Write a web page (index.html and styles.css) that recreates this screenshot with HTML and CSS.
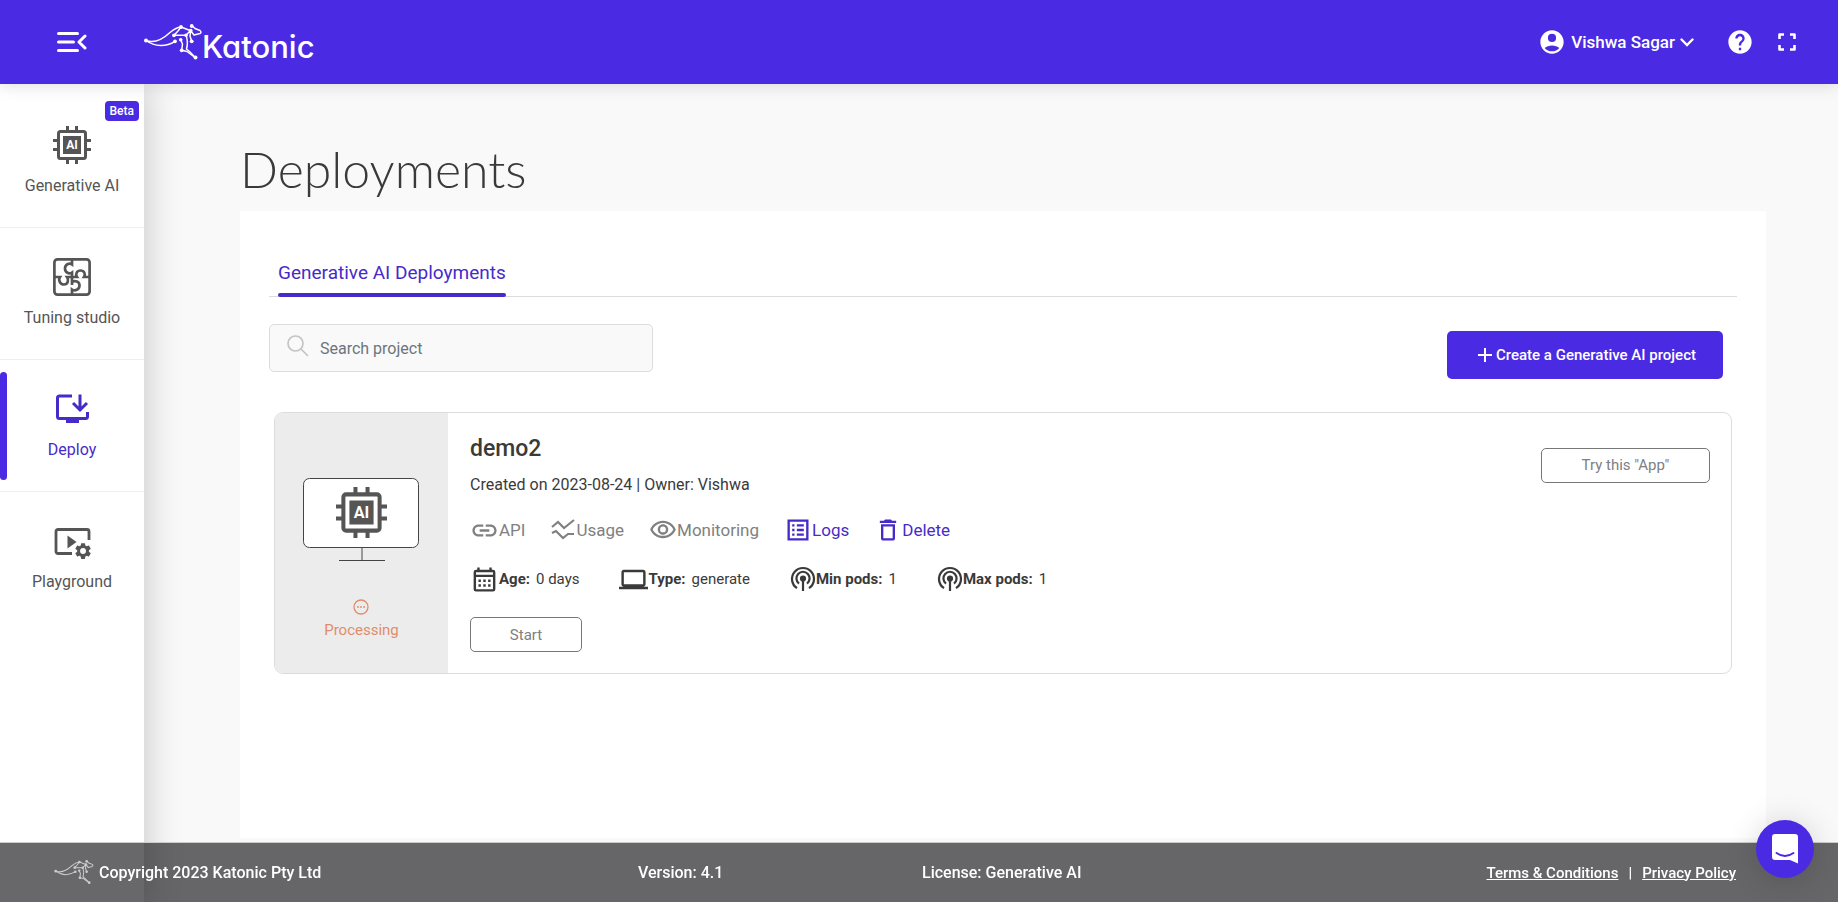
FILE: index.html
```html
<!DOCTYPE html>
<html lang="en">
<head>
<meta charset="utf-8">
<title>Katonic – Deployments</title>
<link rel="stylesheet" href="styles.css">
</head>
<body>
<svg class="defs" aria-hidden="true">
  <symbol id="roo" viewBox="0 0 58 37">
    <g fill="none" stroke="currentColor" stroke-width="1.500" stroke-linejoin="round" stroke-linecap="round">
      <path d="M2 16.500C11 20 19 15 26 8.500C30 5 33 3.500 37 3L46.700 6.700"/>
      <path d="M2 16.500C11 23 22 23 31 17.300"/>
      <path d="M47.700 1.300L51 4.500L56 6.500Q58 8.500 56 9.500L50 11L46.700 6.700"/>
      <path d="M46.700 6.700L46 12L47.700 17.300M37 3L34 7L30 11.300L42 11.300L46 7"/>
      <path d="M36.700 15.700L38.500 20L37.700 26.300L43 27.500L51 33.300"/>
      <path d="M42 11.300Q44.500 18 42.500 25L46 28L51 33.300"/>
    </g>
    <g fill="currentColor">
      <circle cx="2" cy="16.500" r="2"/><circle cx="37" cy="3" r="1.900"/><circle cx="46.700" cy="6.700" r="1.900"/><circle cx="47.700" cy="2" r="1.900"/><circle cx="30" cy="11.300" r="1.900"/><circle cx="42" cy="11.300" r="1.800"/><circle cx="31" cy="17.300" r="1.900"/><circle cx="36.700" cy="15.700" r="1.800"/><circle cx="37.700" cy="26.300" r="1.900"/><circle cx="47.700" cy="17.300" r="1.900"/><circle cx="51.500" cy="33.500" r="2"/>
    </g>
  </symbol>
  <symbol id="chip" viewBox="0 0 38 38">
    <path fill="currentColor" d="M13 0h3v5h-3zM22 0h3v5h-3zM13 33h3v5h-3zM22 33h3v5h-3zM0 13h5v3H0zM0 22h5v3H0zM33 13h5v3h-5zM33 22h5v3h-5zM10 10h18v18H10z"/>
    <rect x="5.500" y="5.500" width="27" height="27" rx="2" fill="none" stroke="currentColor" stroke-width="3"/>
    <text x="19" y="23" text-anchor="middle" class="chip-text">AI</text>
  </symbol>
  <symbol id="pods" viewBox="0 0 26 26">
    <g fill="none" stroke="currentColor" stroke-width="2.200"><path d="M7 22.200A11 11 0 1 1 19 22.200M9 17.600A6.600 6.600 0 1 1 17 17.600M13 13v12"/><circle cx="13" cy="12.500" r="2" fill="currentColor"/></g>
  </symbol>
</svg>

<header class="topbar">
  <button class="icon-btn menu-btn" aria-label="Collapse menu">
    <svg width="30" height="20" viewBox="0 0 30 20" fill="none" stroke="currentColor" stroke-width="3" stroke-linecap="round" stroke-linejoin="round"><path d="M1.500 1.500h19M1.500 10h15M1.500 18.500h19M28 4L22 10L28 16"/></svg>
  </button>
  <a class="brand" href="#"><svg class="brand-roo" width="58" height="37"><use href="#roo"/></svg><span>Katonic</span></a>
  <button class="user">
    <svg width="28" height="28" viewBox="0 0 24 24" fill="currentColor"><path d="M12 2C6.480 2 2 6.480 2 12s4.480 10 10 10 10-4.480 10-10S17.520 2 12 2zm0 3a3.500 3.500 0 1 1 0 7 3.500 3.500 0 0 1 0-7zm0 15c-2.500 0-4.800-1.100-6.300-2.900C7.200 15.800 9.600 15 12 15s4.800.8 6.300 2.100A8.200 8.200 0 0 1 12 20z"/></svg>
    <span>Vishwa Sagar</span>
    <svg width="14" height="9" viewBox="0 0 14 9" fill="none" stroke="currentColor" stroke-width="2.400" stroke-linecap="round"><path d="M1.500 1.500L7 7L12.500 1.500"/></svg>
  </button>
  <button class="icon-btn" aria-label="Help"><svg width="28" height="28" viewBox="0 0 24 24" fill="currentColor"><path d="M12 2C6.480 2 2 6.480 2 12s4.480 10 10 10 10-4.480 10-10S17.520 2 12 2zm1 17h-2v-2h2v2zm2.070-7.750l-.9.920C13.450 12.900 13 13.500 13 15h-2v-.5c0-1.100.450-2.100 1.170-2.830l1.240-1.260c.370-.360.590-.860.590-1.410 0-1.100-.9-2-2-2s-2 .9-2 2H8c0-2.210 1.790-4 4-4s4 1.790 4 4c0 .880-.360 1.680-.930 2.250z"/></svg></button>
  <button class="icon-btn" aria-label="Full screen"><svg width="18" height="18" viewBox="0 0 18 18" fill="none" stroke="currentColor" stroke-width="2.600" stroke-linejoin="round"><path d="M1.500 6V1.500H6M12 1.500h4.500V6M16.500 12v4.500H12M6 16.500H1.500V12"/></svg></button>
</header>

<div class="shell">
  <nav class="sidebar">
    <a class="nav-item" href="#"><span class="beta">Beta</span><svg width="38" height="38"><use href="#chip"/></svg><span>Generative AI</span></a>
    <a class="nav-item" href="#"><svg width="38" height="38" viewBox="0 0 38 38" fill="none" stroke="currentColor" stroke-width="2.700"><rect x="1.400" y="1.400" width="35.200" height="35.200" rx="3"/><path d="M19 1v5.500C16 4.500 12 6.500 12 10.500s4 6 7 4V27M1 19h6c-2 3 0 7.500 4 7.500s5-4.500 3-7.500h10c-2-3 0-6.500 3.500-6.500s5.500 3.500 3.500 6.500h6M19 37v-5.500c3 2 7.500 0 7.500-4s-4.500-5.500-7.500-3.500"/></svg><span>Tuning studio</span></a>
    <a class="nav-item active" href="#"><svg width="38" height="38" viewBox="0 0 38 38" fill="none" stroke="currentColor" stroke-width="3"><path d="M19 6H6.500a2 2 0 0 0-2 2v18.500a2 2 0 0 0 2 2h26a2 2 0 0 0 2-2V22M27 4.500v14M20 13l7 7 7-7"/><path d="M13 29h13v4H13z" fill="currentColor" stroke="none"/></svg><span>Deploy</span></a>
    <a class="nav-item" href="#"><svg width="38" height="38" viewBox="0 0 38 38"><path d="M19 31.500H5a2 2 0 0 1-2-2V9.500a2 2 0 0 1 2-2h29a2 2 0 0 1 2 2v8.500" fill="none" stroke="currentColor" stroke-width="2.800"/><path d="M14.500 13.500v13l9-6.500z" fill="currentColor"/><path transform="translate(20.200 19.200) scale(.82)" fill="currentColor" d="M19.140 12.940c.04-.3.060-.610.060-.940 0-.320-.020-.640-.070-.940l2.030-1.580c.180-.140.230-.410.120-.610l-1.920-3.320c-.120-.220-.370-.290-.590-.220l-2.390.960c-.5-.380-1.030-.7-1.620-.940l-.360-2.540c-.040-.240-.240-.410-.480-.410h-3.840c-.240 0-.430.170-.470.410l-.360 2.540c-.590.240-1.130.570-1.620.940l-2.390-.960c-.220-.080-.470 0-.590.220L2.740 8.870c-.120.210-.080.470.120.610l2.030 1.580c-.050.3-.090.630-.090.940s.020.640.070.940l-2.030 1.580c-.180.140-.230.410-.120.610l1.920 3.320c.120.220.370.290.590.220l2.390-.960c.5.380 1.030.7 1.620.940l.360 2.540c.050.240.240.410.480.410h3.840c.240 0 .440-.170.470-.410l.360-2.540c.590-.240 1.130-.560 1.620-.940l2.390.960c.220.080.470 0 .590-.220l1.920-3.320c.120-.220.070-.470-.120-.610l-2.010-1.580zM12 15.600a3.600 3.600 0 1 1 0-7.200 3.600 3.600 0 0 1 0 7.200z"/></svg><span>Playground</span></a>
  </nav>

  <main class="content">
    <h1>Deployments</h1>
    <section class="panel">
      <div class="tabs"><a class="tab" href="#">Generative AI Deployments</a></div>
      <div class="tools">
        <label class="search"><svg width="22" height="22" viewBox="0 0 22 22" fill="none" stroke="currentColor" stroke-width="1.700"><circle cx="8.500" cy="8.500" r="7.500"/><path d="M14 14l7 7"/></svg><input type="text" placeholder="Search project" aria-label="Search project"></label>
        <button class="create"><svg width="14" height="14" viewBox="0 0 14 14" stroke="currentColor" stroke-width="2"><path d="M7 0v14M0 7h14"/></svg>Create a Generative AI project</button>
      </div>
      <article class="card">
        <div class="thumb">
          <svg width="118" height="86" viewBox="0 0 118 86"><rect x="0.500" y="1.500" width="115" height="69" rx="6" fill="#fff" stroke="#444"/><path d="M59 71v12" stroke="#999" stroke-width="2"/><path d="M36 83.500h46" stroke="#444"/><use href="#chip" x="33" y="10" width="51" height="51"/></svg>
          <span class="status"><svg width="16" height="16" viewBox="0 0 16 16"><circle cx="8" cy="8" r="7" fill="none" stroke="currentColor" stroke-width="1.300"/><path d="M4 7.200h1.800v1.600H4zM7.100 7.200h1.800v1.600H7.100zM10.200 7.200H12v1.600h-1.800z" fill="currentColor"/></svg>Processing</span>
        </div>
        <div class="info">
          <div class="head">
            <div><h2>demo2</h2><p>Created on 2023-08-24 | Owner: Vishwa</p></div>
            <button class="outline try">Try this "App"</button>
          </div>
          <div class="links">
            <button disabled><svg width="29" height="29" viewBox="0 0 24 24" fill="currentColor"><path d="M3.900 12c0-1.710 1.390-3.100 3.100-3.100h4V7H7c-2.760 0-5 2.240-5 5s2.240 5 5 5h4v-1.900H7c-1.710 0-3.100-1.390-3.100-3.100zM8 13h8v-2H8v2zm9-6h-4v1.900h4c1.710 0 3.100 1.390 3.100 3.100s-1.390 3.100-3.100 3.100h-4V17h4c2.760 0 5-2.240 5-5s-2.240-5-5-5z"/></svg>API</button>
            <button disabled><svg width="26" height="26" viewBox="0 0 26 26" fill="none" stroke="currentColor" stroke-width="2.200"><path d="M2 10l6-5 6 6L24 3M2 16l4-2 7 7 5-4h6"/></svg>Usage</button>
            <button disabled><svg width="28" height="28" viewBox="0 0 24 24" fill="currentColor"><path d="M12 6c3.790 0 7.170 2.130 8.820 5.500C19.170 14.870 15.790 17 12 17s-7.170-2.130-8.820-5.500C4.830 8.130 8.210 6 12 6m0-2C7 4 2.730 7.110 1 11.500 2.730 15.890 7 19 12 19s9.270-3.110 11-7.500C21.270 7.110 17 4 12 4zm0 5a2.500 2.500 0 0 1 0 5 2.500 2.500 0 0 1 0-5m0-2c-2.480 0-4.500 2.020-4.500 4.500S9.520 16 12 16s4.500-2.020 4.500-4.500S14.480 7 12 7z"/></svg>Monitoring</button>
            <button><svg width="28" height="28" viewBox="0 0 24 24" fill="currentColor"><path d="M11 7h6v2h-6zm0 4h6v2h-6zm0 4h6v2h-6zM7 7h2v2H7zm0 4h2v2H7zm0 4h2v2H7zM21 3H3v18h18V3zm-2 16H5V5h14v14z"/></svg>Logs</button>
            <button><svg width="28" height="28" viewBox="0 0 24 24" fill="currentColor"><path d="M6 19c0 1.100.9 2 2 2h8c1.100 0 2-.9 2-2V7H6v12zM8 9h8v10H8V9zm7.500-5l-1-1h-5l-1 1H5v2h14V4z"/></svg>Delete</button>
          </div>
          <ul class="stats">
            <li><svg width="29" height="29" viewBox="0 0 24 24" fill="currentColor"><path d="M19 4h-1V2h-2v2H8V2H6v2H5a2 2 0 0 0-2 2v14a2 2 0 0 0 2 2h14a2 2 0 0 0 2-2V6a2 2 0 0 0-2-2zm0 16H5V10h14v10zm0-12H5V6h14v2zM7 12h2v2H7zm4 0h2v2h-2zm4 0h2v2h-2zm-8 4h2v2H7zm4 0h2v2h-2zm4 0h2v2h-2z"/></svg><b>Age:</b> 0 days</li>
            <li><svg width="29" height="29" viewBox="0 0 24 24" fill="currentColor"><path d="M20 18c1.100 0 2-.9 2-2V6c0-1.100-.9-2-2-2H4c-1.100 0-2 .9-2 2v10c0 1.100.9 2 2 2H0v2h24v-2h-4zM4 6h16v10H4V6z"/></svg><b>Type:</b> generate</li>
            <li><svg width="26" height="26"><use href="#pods"/></svg><b>Min pods:</b> 1</li>
            <li><svg width="26" height="26"><use href="#pods"/></svg><b>Max pods:</b> 1</li>
          </ul>
          <button class="outline start">Start</button>
        </div>
      </article>
    </section>
  </main>
</div>

<footer class="footer">
  <span class="copy"><svg width="40" height="25"><use href="#roo"/></svg>Copyright 2023 Katonic Pty Ltd</span>
  <span>Version: 4.1</span>
  <span>License: Generative AI</span>
  <span class="legal"><a href="#">Terms &amp; Conditions</a><span>|</span><a href="#">Privacy Policy</a></span>
</footer>
<button class="chat" aria-label="Open chat"><svg width="26" height="30" viewBox="0 0 26 30"><path d="M3 0h20a3 3 0 0 1 3 3v26.500L18 26H3a3 3 0 0 1-3-3V3a3 3 0 0 1 3-3z" fill="#fff"/><path d="M4.500 19q8.500 6 17 0" fill="none" stroke="#4a2ae3" stroke-width="2" stroke-linecap="round"/></svg></button>
</body>
</html>
```
FILE: styles.css
```css
:root {
  --brand: #4a2ae3;
  --accent: #472bc9;
  --ink: #3a3a3a;
  --muted: #808080;
  --line: #dcdcde;
}
* { box-sizing: border-box; }
body {
  margin: 0;
  min-height: 100vh;
  display: flex;
  flex-direction: column;
  background: #f9f9f9;
  color: var(--ink);
  font: 16px/24px Roboto, "Liberation Sans", sans-serif;
}
button, input { font: inherit; color: inherit; }
button { cursor: pointer; border: 0; background: none; padding: 0; }
a { color: inherit; text-decoration: none; }
h1, h2, p, ul { margin: 0; padding: 0; }
svg { display: block; flex: none; }
.defs { display: none; }
.chip-text { font: 700 12px Roboto, sans-serif; fill: #fff; }

.topbar {
  position: relative;
  z-index: 2;
  display: flex;
  align-items: center;
  height: 84px;
  padding: 0 42px 0 57px;
  background: var(--brand);
  color: #fff;
  box-shadow: 0 2px 16px rgba(0, 0, 0, .12);
}
.icon-btn { display: flex; align-items: center; }
.menu-btn { margin-right: 57px; }
.brand {
  display: flex;
  align-items: center;
  margin-right: auto;
  font: 500 31px/38px Inter, sans-serif;
  font-feature-settings: "cv11";
}
.brand span { padding-top: 10px; }
.user {
  display: flex;
  align-items: center;
  gap: 5px;
  margin-right: 32px;
  font-size: 17px;
  font-weight: 500;
}
.topbar .icon-btn + .icon-btn { margin-left: 24px; }

.shell { flex: 1; display: flex; }
.sidebar {
  position: relative;
  z-index: 1;
  width: 144px;
  padding-top: 12px;
  background: #fff;
  box-shadow: 0 0 36px rgba(0, 0, 0, .22);
}
.nav-item {
  position: relative;
  display: flex;
  flex-direction: column;
  align-items: center;
  gap: 10px;
  height: 132px;
  padding-top: 30px;
  color: #555;
  border-bottom: 1px solid #efefef;
}
.nav-item:last-child { border-bottom: 0; }
.nav-item.active { color: var(--accent); }
.nav-item.active::before {
  content: "";
  position: absolute;
  left: 0;
  top: 12px;
  width: 7px;
  height: 108px;
  border-radius: 4px;
  background: var(--brand);
}
.beta {
  position: absolute;
  top: 5px;
  right: 5px;
  padding: 0 5px;
  border-radius: 4px;
  background: var(--brand);
  color: #fff;
  font: 500 12px/20px Roboto, sans-serif;
}

.content {
  flex: 1;
  display: flex;
  flex-direction: column;
  padding: 55px 72px 64px 96px;
}
h1 { font: 300 50px/60px Lato, sans-serif; margin-bottom: 12px; }
.panel { flex: 1; padding: 44px 29px 0; background: #fff; }
.tabs { display: flex; padding-left: 9px; border-bottom: 1px solid var(--line); }
.tab {
  position: relative;
  padding: 6px 0 11px;
  color: var(--accent);
  font-size: 19px;
}
.tab::after {
  content: "";
  position: absolute;
  left: 0;
  right: 0;
  bottom: -1px;
  height: 4px;
  border-radius: 2px;
  background: var(--accent);
}
.tools { display: flex; justify-content: space-between; padding: 27px 14px 0 0; }
.search {
  display: flex;
  align-items: center;
  gap: 11px;
  width: 384px;
  height: 48px;
  padding: 0 17px;
  border: 1px solid var(--line);
  border-radius: 5px;
  background: #f9f9f9;
  color: #c4c4c4;
}
.search svg { margin-bottom: 4px; }
.search input { flex: 1; border: 0; outline: 0; background: none; padding: 1px 0 0; }
.search input::placeholder { color: #6c757d; opacity: 1; }
.create {
  display: flex;
  align-items: center;
  justify-content: center;
  gap: 4px;
  width: 276px;
  height: 48px;
  margin-top: 7px;
  padding-left: 4px;
  border-radius: 5px;
  background: var(--brand);
  color: #fff;
  font-size: 15px;
  font-weight: 500;
}

.card {
  display: flex;
  margin: 33px 5px 0;
  border: 1px solid var(--line);
  border-radius: 9px;
  overflow: hidden;
}
.thumb {
  display: flex;
  flex-direction: column;
  align-items: center;
  gap: 36px;
  width: 173px;
  padding-top: 64px;
  background: #ececec;
  color: #555;
}
.status {
  display: flex;
  flex-direction: column;
  align-items: center;
  gap: 3px;
  color: #e08d6c;
  font-size: 15px;
}
.info { flex: 1; padding: 20px 21px 21px 22px; }
.head { display: flex; justify-content: space-between; align-items: center; }
h2 { font-size: 23px; line-height: 32px; font-weight: 500; }
.head p { padding-top: 8px; }
.outline {
  height: 35px;
  border: 1px solid #777;
  border-radius: 5px;
  background: #fff;
  color: var(--muted);
  font-size: 15px;
}
.try { width: 169px; }
.start { width: 112px; margin-top: 23px; }
.links { display: flex; gap: 25px; padding-top: 18px; }
.links button { display: flex; align-items: center; height: 30px; color: var(--accent); font-size: 17px; }
.links button:disabled { color: var(--muted); }
.stats { display: flex; gap: 40px; padding-top: 19px; list-style: none; font-size: 15px; }
.stats li { display: flex; align-items: center; height: 30px; }
.stats b { margin-right: 6px; }

.footer {
  position: fixed;
  z-index: 3;
  left: 0;
  right: 0;
  bottom: 0;
  display: grid;
  grid-template-columns: 584fr 284fr 407fr 407fr;
  align-items: center;
  height: 60px;
  padding: 0 102px 0 54px;
  border-top: 1px solid #ccc;
  background: rgba(3, 3, 6, .6);
  color: #fff;
  font-weight: 500;
}
.copy { display: flex; align-items: center; gap: 5px; }
.copy svg { color: #ccc; }
.legal { display: flex; justify-content: flex-end; gap: 10px; font-size: 15px; }
.legal a { text-decoration: underline; }
.chat {
  position: fixed;
  z-index: 4;
  right: 24px;
  bottom: 24px;
  display: grid;
  place-items: center;
  width: 58px;
  height: 58px;
  border-radius: 50%;
  background: var(--brand);
  box-shadow: 0 2px 32px rgba(0, 0, 0, .16);
}
```
